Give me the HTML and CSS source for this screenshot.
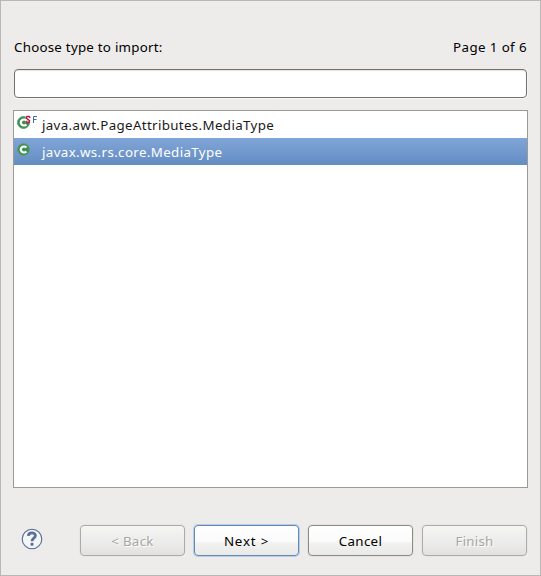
FILE: index.html
```html
<!DOCTYPE html>
<html lang="en">
<head>
<meta charset="utf-8">
<title>Import type</title>
<link rel="stylesheet" href="styles.css">
</head>
<body>
<main class="dialog">
  <header class="heading"><label class="prompt" for="filter">Choose type to import:</label><span class="page">Page 1 of 6</span></header>
  <input class="filter" id="filter" type="text">
  <ul class="types">
    <li class="type">
      <svg class="icon" width="22" height="16" viewBox="0 0 22 16">
        <circle cx="6.5" cy="8.5" r="6" fill="#3d8f55" stroke="#5fa079"/>
        <path d="M9.4 6.6A3.2 2.9 0 1 0 9.4 10.4" fill="none" stroke="#fff" stroke-width="2.2"/>
        <path d="M8.5 1.5h5v7.5h-5z" fill="#fff" opacity=".6"/>
        <path d="M12.8 4V3L12 2.5H10L9.5 3v1.5l3 2V8l-.5.5H10L9.2 8V7" fill="none" stroke="#c8103e" stroke-width="1.3"/>
        <path d="M16.5 9V2.5H20M16.5 5.5H19.5" fill="none" stroke="#3f6e9e"/>
      </svg>
      <span class="name first">java.awt.PageAttributes.MediaType</span>
    </li>
    <li class="type selected">
      <svg class="icon" width="22" height="16" viewBox="0 0 22 16">
        <circle cx="6.5" cy="8.5" r="6" fill="#3d8f55" stroke="#5fa079"/>
        <path d="M9.4 6.6A3.2 2.9 0 1 0 9.4 10.4" fill="none" stroke="#fff" stroke-width="2.2"/>
      </svg>
      <span class="name second">javax.ws.rs.core.MediaType</span>
    </li>
  </ul>
  <footer class="actions">
    <svg class="help" width="22" height="22" viewBox="0 0 22 22">
      <circle cx="11" cy="11" r="9.8" fill="#f4f5f7" stroke="#526b92" stroke-width="1.1"/>
      <path d="M7.3 7.9C7.6 3.8 14.5 3.9 14.4 7.7C14.3 10.2 11 10 11 13.2" fill="none" stroke="#5b7096" stroke-width="2.8"/>
      <rect x="9.5" y="14.7" width="3" height="3" rx="1" fill="#5b7096"/>
    </svg>
    <button class="button" disabled><span class="back">&lt; Back</span></button>
    <button class="button default"><span class="next">Next &gt;</span></button>
    <button class="button"><span class="cancel">Cancel</span></button>
    <button class="button" disabled><span class="finish">Finish</span></button>
  </footer>
</main>
</body>
</html>
```
FILE: styles.css
```css
* { box-sizing: border-box; }
body { margin: 0; font: 13.33px/20px "Noto Sans", sans-serif; color: #000; }
.dialog {
  display: flex;
  flex-direction: column;
  width: 541px;
  height: 576px;
  padding: 36px 12px 18px;
  border: 1px solid #bab8b6;
  background: #edeceb;
}
.heading { display: flex; justify-content: space-between; height: 20px; padding: 0 1px; margin-bottom: 12px; }
.prompt { letter-spacing: .24px; }
.page { letter-spacing: .4px; }
.filter {
  height: 29px;
  margin: 0 1px 12px;
  padding: 0 6px;
  border: 1px solid #73716e;
  border-radius: 4px;
  background: #fff;
  box-shadow: inset 0 1px 1px #e4e4e3, 0 1px 0 #f8f8f7, 1px 0 0 #f3f3f2;
  outline: none;
}
.types {
  height: 378px;
  margin: 0 0 37px;
  padding: 0;
  border: 1px solid #9c9a97;
  background: #fff;
  list-style: none;
}
.type { display: flex; height: 27px; padding-left: 3px; color: #1a1a1a; }
.icon { flex: none; margin: 3px 3px 0 0; }
.name { padding-top: 4px; white-space: nowrap; }
.first { letter-spacing: .35px; }
.second { letter-spacing: .37px; }
.selected { color: #fff; background: linear-gradient(#80a5d8, #648dc2); }
.actions { display: flex; align-items: center; gap: 9px; height: 31px; padding-left: 8px; }
.help { flex: none; margin: -3px 28px 0 0; }
.button {
  width: 105px;
  height: 31px;
  padding: 1px 0 0;
  border: 1px solid #8c8a87;
  border-radius: 4px;
  background: linear-gradient(#fff, #fafafa 55%, #f2f2f1 58%, #e9e9e8);
  box-shadow: 0 0 0 1px #e4e3e2;
  color: #000;
  font: inherit;
}
.button:disabled {
  border-color: #adaba9;
  background: linear-gradient(#f5f5f4, #ecebeb 60%, #e2e1e0);
  box-shadow: 0 0 0 1px #e7e6e5, 1px 1px 0 0 #f8f8f7;
  color: #a9a7a4;
  text-shadow: 1px 1px 0 #fff;
}
.default {
  border-color: #6488b8;
  box-shadow: 0 0 0 1px #b8cce5;
}
.back { letter-spacing: .3px; }
.next { letter-spacing: .8px; }
.cancel { letter-spacing: .3px; }
.finish { letter-spacing: .2px; }
```
